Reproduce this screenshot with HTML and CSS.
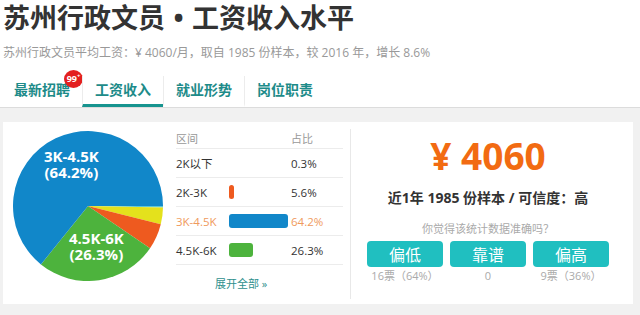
FILE: index.html
```html
<!DOCTYPE html>
<html lang="zh-CN">
<head>
    <meta charset="UTF-8">
    <meta name="viewport" content="width=device-width, initial-scale=1.0">
    <title>苏州行政文员工资收入水平</title>
    <link rel="stylesheet" href="styles.css">
</head>
<body>
    <div class="head">
        <h1 class="title">苏州行政文员<span class="dot">•</span>工资收入水平</h1>
        <p class="sub">苏州行政文员平均工资：¥ 4060/月，取自 1985 份样本，较 2016 年，增长 8.6%</p>
        <ul class="tabs">
            <li class="tab">最新招聘<span class="badge">99<sup>+</sup></span></li>
            <li class="tab on">工资收入</li>
            <li class="tab">就业形势</li>
            <li class="tab">岗位职责</li>
        </ul>
    </div>

    <div class="card">
        <div class="chart">
            <svg class="pie" width="150" height="150" viewBox="0 0 150 150">
                <path d="M75,75 L150,75 A75,75 0 0 1 149.99,76.41 Z" fill="#5cc6d6"/>
                <path d="M75,75 L149.99,76.41 A75,75 0 0 1 147.76,93.19 Z" fill="#e4e11c"/>
                <path d="M75,75 L147.76,93.19 A75,75 0 0 1 137.03,117.16 Z" fill="#ee5a1f"/>
                <path d="M75,75 L137.03,117.16 A75,75 0 0 1 27.92,133.39 Z" fill="#4db33d"/>
                <path d="M75,75 L27.92,133.39 A75,75 0 1 1 150,75 Z" fill="#1187c9"/>
            </svg>
            <div class="lbl lbl-a">3K-4.5K<br>(64.2%)</div>
            <div class="lbl lbl-b">4.5K-6K<br>(26.3%)</div>
        </div>

        <div class="dist">
            <div class="row th">
                <span class="c-name">区间</span>
                <span class="c-bar"></span>
                <span class="c-pct">占比</span>
            </div>
            <div class="row">
                <span class="c-name">2K以下</span>
                <span class="c-bar"></span>
                <span class="c-pct">0.3%</span>
            </div>
            <div class="row">
                <span class="c-name">2K-3K</span>
                <span class="c-bar"><i class="bar orange" style="width:5px"></i></span>
                <span class="c-pct">5.6%</span>
            </div>
            <div class="row hl">
                <span class="c-name">3K-4.5K</span>
                <span class="c-bar"><i class="bar blue" style="width:59px"></i></span>
                <span class="c-pct">64.2%</span>
            </div>
            <div class="row">
                <span class="c-name">4.5K-6K</span>
                <span class="c-bar"><i class="bar green" style="width:24px"></i></span>
                <span class="c-pct">26.3%</span>
            </div>
            <div class="more">展开全部 »</div>
        </div>

        <div class="sep"></div>

        <div class="score">
            <div class="price">¥ 4060</div>
            <div class="stat">近1年 1985 份样本 / 可信度：高</div>
            <div class="ask">你觉得该统计数据准确吗？</div>
            <div class="votes">
                <div class="vote"><button class="btn">偏低</button><span class="cnt">16票（64%）</span></div>
                <div class="vote"><button class="btn">靠谱</button><span class="cnt">0</span></div>
                <div class="vote"><button class="btn">偏高</button><span class="cnt">9票（36%）</span></div>
            </div>
        </div>
    </div>
</body>
</html>
```

FILE: styles.css
```css
body{
    margin:0;
    background:#f1f1f1;
    font-family:"Open Sans","Noto Sans CJK SC",sans-serif;
    color:#333;
}

.head{
    background:#fff;
    border-bottom:1px solid #dcdcdc;
    padding:0 0 0 3px;
}

.title{
    margin:0;
    font-size:27px;
    line-height:36px;
    font-weight:bold;
    color:#333;
}

.title .dot{
    display:inline-block;
    width:27px;
    text-align:center;
}

.sub{
    margin:8px 0 0;
    font-size:12px;
    line-height:18px;
    color:#999;
}

.tabs{
    list-style:none;
    margin:14px 0 0 -1px;
    padding:0;
    display:flex;
}

.tab{
    position:relative;
    padding:0 12px;
    font-size:14px;
    font-weight:bold;
    line-height:28px;
    color:#1d8b89;
    border-bottom:3px solid transparent;
}

.tab + .tab{
    border-left:1px solid #ececec;
}

.tab.on{
    border-bottom-color:#17948f;
}

.badge{
    position:absolute;
    left:62px;
    top:-6px;
    width:19px;
    height:18px;
    border-radius:50%;
    background:#e3201f;
    color:#fff;
    font-size:9px;
    line-height:18px;
    text-align:center;
    font-weight:bold;
}

.badge sup{
    font-size:6px;
    line-height:0;
}

.card{
    display:flex;
    margin:14px 7px 0 3px;
    height:182px;
    background:#fff;
}

.chart{
    position:relative;
    padding:9px 0 0 10px;
    width:150px;
}

.pie{
    display:block;
}

.lbl{
    position:absolute;
    color:#fff;
    font-size:15px;
    font-weight:bold;
    line-height:16px;
    text-align:center;
}

.lbl-a{ left:41px; top:26px; }
.lbl-b{ left:66px; top:108px; }

.dist{
    margin-left:13px;
    width:167px;
    padding-top:5px;
}

.row{
    display:flex;
    align-items:center;
    height:28px;
    border-bottom:1px solid #ececec;
    font-size:11.5px;
    color:#333;
}

.row.th{
    height:21px;
    font-size:11px;
    color:#999;
}

.row.hl{
    color:#ef9a5d;
}

.c-name{ width:53px; }
.c-bar{ width:62px; display:flex; }
.c-pct{ flex:1; }

.bar{
    display:block;
    height:14px;
    border-radius:3px;
}

.orange{ background:#ee5a1f; }
.blue{ background:#1187c9; }
.green{ background:#4db33d; }

.more{
    margin-top:10px;
    padding-left:39px;
    font-size:11px;
    line-height:18px;
    color:#2e8f8d;
}

.sep{
    width:1px;
    margin:7px 0 5px 7px;
    background:#e8e8e8;
}

.score{
    flex:1;
    padding:12px 8px 0 0;
    text-align:center;
}

.price{
    font-size:37px;
    font-weight:bold;
    line-height:44px;
    color:#f26b12;
}

.stat{
    margin-top:10px;
    font-size:14px;
    font-weight:bold;
    line-height:20px;
}

.ask{
    margin-top:13px;
    font-size:11px;
    line-height:16px;
    color:#aaa;
}

.votes{
    margin-top:4px;
    display:flex;
    justify-content:center;
    gap:7px;
}

.vote{
    width:76px;
    display:flex;
    flex-direction:column;
}

.btn{
    height:26px;
    border:0;
    border-radius:4px;
    background:#20bfc0;
    color:#fff;
    font-family:inherit;
    font-size:16px;
    padding:0;
}

.cnt{
    margin-top:2px;
    font-size:11px;
    line-height:14px;
    color:#aaa;
}
```
